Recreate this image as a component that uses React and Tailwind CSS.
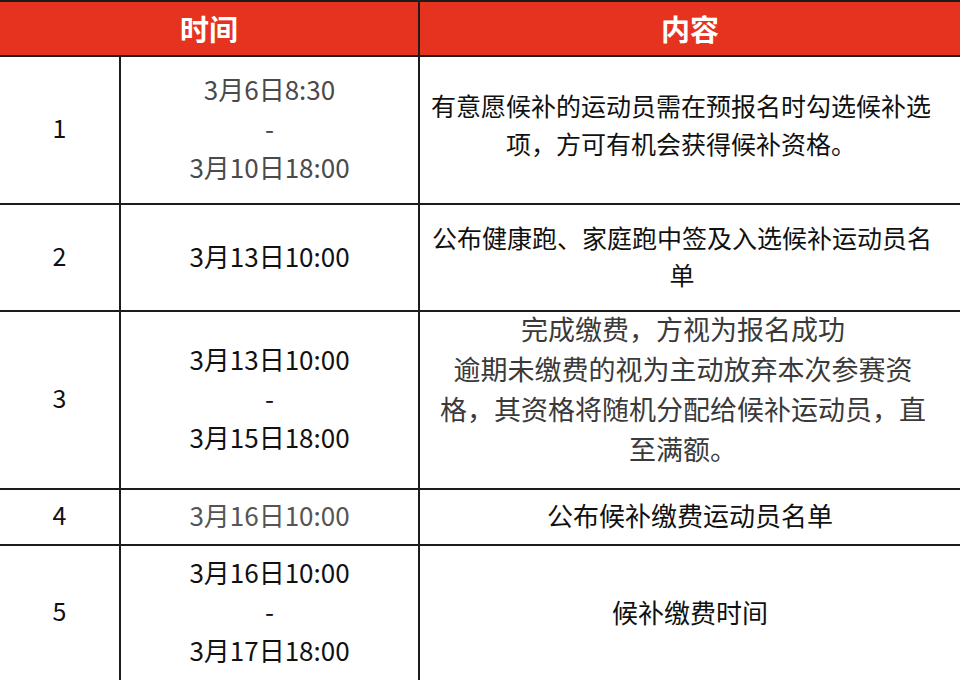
import React from 'react';

const font = { fontFamily: '"Noto Sans CJK SC", "Noto Sans", sans-serif' };

const rows = [
	{
		no: '1',
		h: 'h-[148px]',
		time: ['3月6日8:30', '-', '3月10日18:00'],
		timeColor: 'text-[#4a4a4a]',
		content: ['有意愿候补的运动员需在预报名时勾选候补选', '项，方可有机会获得候补资格。'],
		contentClass: 'text-[25px] leading-[38px] text-[#111] pb-[12px] pr-[18px]',
	},
	{
		no: '2',
		h: 'h-[107px]',
		time: ['3月13日10:00'],
		timeColor: 'text-[#111]',
		content: ['公布健康跑、家庭跑中签及入选候补运动员名', '单'],
		contentClass: 'text-[25px] leading-[37px] text-[#111] pb-[4px] pr-[16px]',
	},
	{
		no: '3',
		h: 'h-[178px]',
		time: ['3月13日10:00', '-', '3月15日18:00'],
		timeColor: 'text-[#111]',
		content: [
			'完成缴费，方视为报名成功',
			'逾期未缴费的视为主动放弃本次参赛资',
			'格，其资格将随机分配给候补运动员，直',
			'至满额。',
		],
		contentClass: 'text-[27px] leading-[40px] text-[#3a3a3a] pb-[22px] pr-[14px]',
	},
	{
		no: '4',
		h: 'h-[56px]',
		time: ['3月16日10:00'],
		timeColor: 'text-[#555]',
		content: ['公布候补缴费运动员名单'],
		contentClass: 'text-[26px] leading-[38px] text-[#111] pb-[4px]',
	},
	{
		no: '5',
		h: 'h-[136px]',
		time: ['3月16日10:00', '-', '3月17日18:00'],
		timeColor: 'text-[#111]',
		content: ['候补缴费时间'],
		contentClass: 'text-[26px] leading-[38px] text-[#111] pb-[2px]',
	},
];

const App = () => {
	return (
		<div className="w-[960px] h-[680px] overflow-hidden bg-white" style={font}>
			{/* Header */}
			<div className="flex h-[57px] bg-[#e5331f] border-t-2 border-b-2 border-[#1c1c1c] text-white font-bold text-[29px]">
				<div className="w-[420px] border-r-2 border-[#1c1c1c] flex items-center justify-center">时间</div>
				<div className="flex-1 flex items-center justify-center">内容</div>
			</div>

			{/* Rows */}
			{rows.map((row) => (
				<div key={row.no} className={`flex border-b-2 border-[#1c1c1c] ${row.h}`}>
					<div className="w-[121px] border-r-2 border-[#1c1c1c] flex items-center justify-center text-[25px] text-[#111] pb-[4px]">
						{row.no}
					</div>
					<div
						className={`w-[299px] border-r-2 border-[#1c1c1c] flex flex-col items-center justify-center text-[26px] leading-[39px] pb-[5px] ${row.timeColor}`}
					>
						{row.time.map((t, i) => (
							<div key={i} className="whitespace-nowrap">
								{t}
							</div>
						))}
					</div>
					<div className={`flex-1 flex flex-col items-center justify-center text-center ${row.contentClass}`}>
						{row.content.map((c, i) => (
							<div key={i} className="whitespace-nowrap">
								{c}
							</div>
						))}
					</div>
				</div>
			))}
		</div>
	);
};

export default App;
